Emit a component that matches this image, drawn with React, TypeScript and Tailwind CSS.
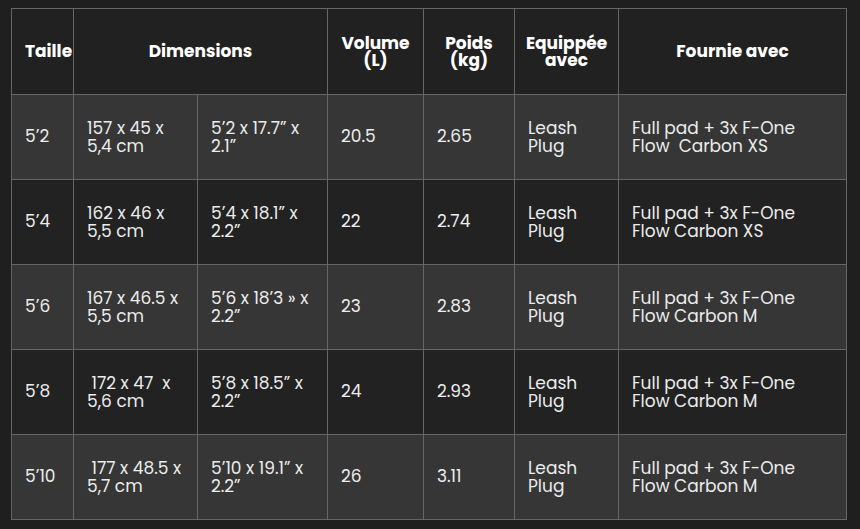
const rows: { size: string; metric: string[]; imperial: string[]; volume: string; weight: string; fins: string[] }[] = [
  { size: "5’2", metric: ["157 x 45 x", "5,4 cm"], imperial: ["5’2 x 17.7” x", "2.1”"], volume: "20.5", weight: "2.65", fins: ["Full pad + 3x F-One", "Flow  Carbon XS"] },
  { size: "5’4", metric: ["162 x 46 x", "5,5 cm"], imperial: ["5’4 x 18.1” x", "2.2”"], volume: "22", weight: "2.74", fins: ["Full pad + 3x F-One", "Flow Carbon XS"] },
  { size: "5’6", metric: ["167 x 46.5 x", "5,5 cm"], imperial: ["5’6 x 18’3 » x", "2.2”"], volume: "23", weight: "2.83", fins: ["Full pad + 3x F-One", "Flow Carbon M"] },
  { size: "5’8", metric: [" 172 x 47  x", "5,6 cm"], imperial: ["5’8 x 18.5” x", "2.2”"], volume: "24", weight: "2.93", fins: ["Full pad + 3x F-One", "Flow Carbon M"] },
  { size: "5’10", metric: [" 177 x 48.5 x", "5,7 cm"], imperial: ["5’10 x 19.1” x", "2.2”"], volume: "26", weight: "3.11", fins: ["Full pad + 3x F-One", "Flow Carbon M"] },
];

function Lines({ lines }: { lines: string[] }) {
  return (
    <div className="whitespace-pre leading-[18px]">
      {lines.map((l, i) => (
        <div key={i}>{l}</div>
      ))}
    </div>
  );
}

export default function App() {
  const th = "border border-[#666] px-0 text-center align-middle font-bold leading-[17px] text-white";
  const td = "border border-[#666] px-[13px] align-middle text-[17px] text-[#ececec]";

  return (
    <div
      className="min-h-[529px] w-full bg-[#1f1f1f] pl-[11px] pt-2"
      style={{ fontFamily: "Poppins, Inter, 'Noto Sans', sans-serif" }}
    >
      <table className="w-[835px] table-fixed border-collapse">
        <colgroup>
          <col className="w-[62px]" />
          <col className="w-[124px]" />
          <col className="w-[130px]" />
          <col className="w-[96px]" />
          <col className="w-[91px]" />
          <col className="w-[104px]" />
          <col className="w-[228px]" />
        </colgroup>
        <thead>
          <tr className="h-[86px] bg-[#212121] text-[17px]">
            <th className="overflow-visible whitespace-nowrap border border-[#666] pl-[13px] pr-0 text-left align-middle font-bold text-white">Taille</th>
            <th colSpan={2} className={th}>Dimensions</th>
            <th className={th}>Volume<br />(L)</th>
            <th className={th}>Poids<br />(kg)</th>
            <th className={th}>Equippée<br />avec</th>
            <th className={th}>Fournie avec</th>
          </tr>
        </thead>
        <tbody>
          {rows.map((r, i) => (
            <tr key={r.size} className={i % 2 === 0 ? "h-[85px] bg-[#363636]" : "h-[85px] bg-[#222222]"}>
              <td className={td}>{r.size}</td>
              <td className={td}><Lines lines={r.metric} /></td>
              <td className={td}><Lines lines={r.imperial} /></td>
              <td className={td}>{r.volume}</td>
              <td className={td}>{r.weight}</td>
              <td className={td}><Lines lines={["Leash", "Plug"]} /></td>
              <td className={td}><Lines lines={r.fins} /></td>
            </tr>
          ))}
        </tbody>
      </table>
    </div>
  );
}
